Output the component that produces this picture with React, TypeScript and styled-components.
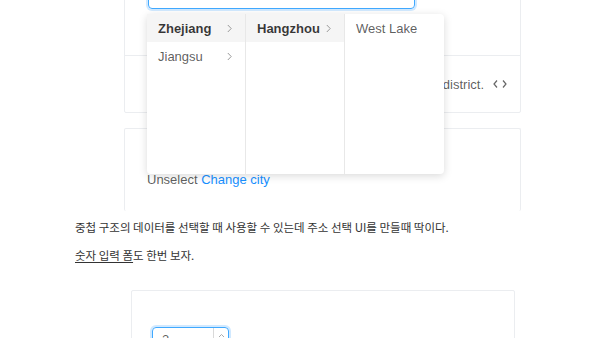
import React from "react";
import styled, { createGlobalStyle } from "styled-components";

const Global = createGlobalStyle`
  html, body { margin: 0; padding: 0; background: #fff; overflow: hidden; }
  body { font-family: "Liberation Sans", Arial, "Noto Sans CJK KR", sans-serif; }
`;

const Page = styled.div`
  width: 600px;
  height: 338px;
  overflow: hidden;
`;

const Scroller = styled.div`
  margin-top: -44px;
  padding-left: 75px;
  display: flex;
  flex-direction: column;
`;

const CodeBox = styled.div<{ $open?: boolean; $ml: number; $w: number }>`
  margin-left: ${(p) => p.$ml}px;
  width: ${(p) => p.$w}px;
  box-sizing: border-box;
  border: 1px solid #ebedf0;
  border-bottom: ${(p) => (p.$open ? "none" : "1px solid #ebedf0")};
  border-radius: 2px;
`;

const Demo = styled.div<{ $pt: number; $pb: number; $pl: number }>`
  position: relative;
  padding: ${(p) => p.$pt}px 24px ${(p) => p.$pb}px ${(p) => p.$pl}px;
`;

const Meta = styled.div`
  border-top: 1px solid #ebedf0;
  height: 57px;
  box-sizing: border-box;
  display: flex;
  align-items: center;
  justify-content: flex-end;
  gap: 9px;
  padding-right: 13px;
  font-size: 13px;
  color: rgba(0, 0, 0, 0.65);
`;

const SelectInput = styled.div`
  width: 267px;
  height: 32px;
  box-sizing: border-box;
  border: 1px solid #40a9ff;
  border-radius: 4px;
  box-shadow: 0 0 0 2px rgba(24, 144, 255, 0.2);
  display: flex;
  align-items: center;
  padding: 0 11px;
  font-size: 13px;
  color: #bfbfbf;
`;

const Dropdown = styled.div`
  position: absolute;
  left: 22px;
  top: 57px;
  display: flex;
  background: #fff;
  border-radius: 4px;
  box-shadow: 0 2px 8px rgba(0, 0, 0, 0.15);
  z-index: 5;
`;

const Column = styled.ul<{ $last?: boolean }>`
  margin: 0;
  padding: 0;
  list-style: none;
  width: 99px;
  height: 160px;
  box-sizing: border-box;
  border-right: ${(p) => (p.$last ? "none" : "1px solid #e8e8e8")};
`;

const Item = styled.li<{ $active?: boolean }>`
  height: 28px;
  display: flex;
  align-items: center;
  justify-content: space-between;
  padding: 0 13px 0 11px;
  font-size: 13px;
  background: ${(p) => (p.$active ? "#f5f5f5" : "transparent")};
  font-weight: ${(p) => (p.$active ? 700 : 400)};
  color: ${(p) => (p.$active ? "rgba(0,0,0,0.78)" : "rgba(0,0,0,0.65)")};
`;

const Gap = styled.div<{ $h: number }>`
  height: ${(p) => p.$h}px;
`;

const Plain = styled.span`
  font-size: 13px;
  color: rgba(0, 0, 0, 0.65);
`;

const Link = styled.a`
  color: #1890ff;
  text-decoration: none;
`;

const Para = styled.p<{ $mb: number }>`
  margin: 0 0 ${(p) => p.$mb}px 0;
  font-family: "Noto Sans CJK KR", sans-serif;
  font-size: 11.5px;
  line-height: 18px;
  color: #333;
`;

const Under = styled.span`
  text-decoration: underline;
  text-underline-offset: 2px;
`;

const NumberInput = styled.div`
  width: 77px;
  height: 30px;
  box-sizing: border-box;
  border: 1px solid #40a9ff;
  border-radius: 4px;
  box-shadow: 0 0 0 2px rgba(24, 144, 255, 0.2);
  display: flex;
`;

const NumberValue = styled.div`
  flex: 1;
  padding: 4px 9px;
  font-size: 13px;
  color: rgba(0, 0, 0, 0.65);
`;

const Handler = styled.div`
  width: 14px;
  border-left: 1px solid #d9d9d9;
  display: flex;
  justify-content: center;
  padding-top: 5px;
`;

const Arrow = () => (
  <svg width="5" height="9" viewBox="0 0 5 9">
    <polyline points="0.8,1 4.2,4.5 0.8,8" fill="none" stroke="#999" strokeWidth="1" />
  </svg>
);

const CodeIcon = () => (
  <svg width="14" height="10" viewBox="0 0 14 10">
    <polyline points="4,1.5 1,5 4,8.5" fill="none" stroke="#666" strokeWidth="1.2" />
    <polyline points="10,1.5 13,5 10,8.5" fill="none" stroke="#666" strokeWidth="1.2" />
  </svg>
);

const UpIcon = () => (
  <svg width="7" height="5" viewBox="0 0 7 5">
    <polyline points="1,4 3.5,1.5 6,4" fill="none" stroke="#aaa" strokeWidth="1" />
  </svg>
);

export default function App() {
  return (
    <Page>
      <Global />
      <Scroller>
        <CodeBox $ml={49} $w={397}>
          <Demo $pt={20} $pb={46} $pl={23}>
            <SelectInput>Please select</SelectInput>
            <Dropdown>
              <Column>
                <Item $active>
                  Zhejiang <Arrow />
                </Item>
                <Item>
                  Jiangsu <Arrow />
                </Item>
              </Column>
              <Column>
                <Item $active>
                  Hangzhou <Arrow />
                </Item>
              </Column>
              <Column $last>
                <Item>West Lake</Item>
              </Column>
            </Dropdown>
          </Demo>
          <Meta>
            <span>Separate province, city and district.</span>
            <CodeIcon />
          </Meta>
        </CodeBox>
        <Gap $h={15} />
        <CodeBox $open $ml={49} $w={397}>
          <Demo $pt={41} $pb={23} $pl={22}>
            <Plain>
              Unselect <Link>Change city</Link>
            </Plain>
          </Demo>
        </CodeBox>
        <Gap $h={7} />
        <Para $mb={10}>
          중첩 구조의 데이터를 선택할 때 사용할 수 있는데 주소 선택 UI를 만들때 딱이다.
        </Para>
        <Para $mb={26}>
          <Under>숫자 입력 폼</Under>도 한번 보자.
        </Para>
        <CodeBox $ml={56} $w={384}>
          <Demo $pt={36} $pb={30} $pl={20}>
            <NumberInput>
              <NumberValue>3</NumberValue>
              <Handler>
                <UpIcon />
              </Handler>
            </NumberInput>
          </Demo>
        </CodeBox>
      </Scroller>
    </Page>
  );
}
